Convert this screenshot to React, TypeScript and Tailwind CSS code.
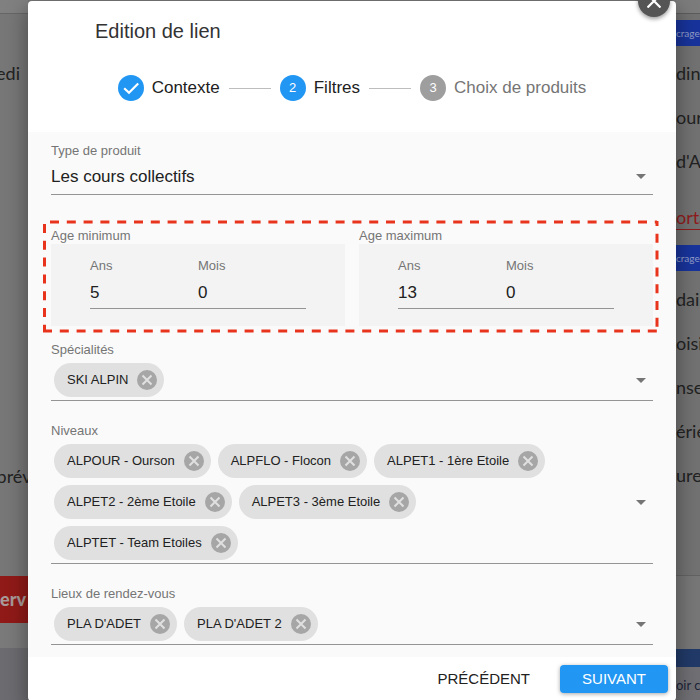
import React from "react";

function CheckIcon() {
  return (
    <svg viewBox="0 0 26 26" className="size-full" fill="none" aria-hidden="true">
      <path d="M6.2 13.2l4.8 4.6L20.2 8.4" stroke="#fff" strokeWidth="2.2" />
    </svg>
  );
}

function ArrowDown() {
  return (
    <svg viewBox="0 0 10 5" className="h-[5px] w-[10px]" aria-hidden="true">
      <path d="M0 0h10L5 5z" fill="#757575" />
    </svg>
  );
}

function StepBadge({ active, children }: { active?: boolean; children: React.ReactNode }) {
  return (
    <span
      className={`flex size-[26px] shrink-0 items-center justify-center rounded-full text-[13px] text-white ${
        active ? "bg-[#2196f3]" : "bg-[#9e9e9e]"
      }`}
    >
      {children}
    </span>
  );
}

function Connector() {
  return <li aria-hidden="true" className="h-px w-[42px] bg-[#bdbdbd]" />;
}

function Stepper() {
  return (
    <ol className="flex items-center justify-center gap-[9px] text-[17px] leading-6 text-[#212121]">
      <li className="flex items-center gap-2">
        <StepBadge active>
          <CheckIcon />
        </StepBadge>
        Contexte
      </li>
      <Connector />
      <li className="flex items-center gap-2" aria-current="step">
        <StepBadge active>2</StepBadge>
        Filtres
      </li>
      <Connector />
      <li className="flex items-center gap-2 text-[#757575]">
        <StepBadge>3</StepBadge>
        Choix de produits
      </li>
    </ol>
  );
}

function Chip({ text }: { text: string }) {
  return (
    <li className="flex h-[34px] items-center gap-[9px] rounded-full bg-[#e0e0e0] pr-[7px] pl-[13px] text-[13px] text-[#212121]">
      {text}
      <button type="button" aria-label={`Retirer ${text}`} className="size-5 rounded-full bg-[#a6a6a6]">
        <svg viewBox="0 0 20 20" className="size-5" fill="none" aria-hidden="true">
          <path d="M5.5 5.5l9 9M14.5 5.5l-9 9" stroke="#e0e0e0" strokeWidth="2" />
        </svg>
      </button>
    </li>
  );
}

function ChipField({ label, chips }: { label: string; chips: string[] }) {
  const id = label.replace(/ /g, "-");
  return (
    <div role="group" aria-labelledby={id}>
      <div id={id} className="text-[13px] leading-4 text-[#757575]">
        {label}
      </div>
      <div className="mt-[5px] flex items-center border-b border-[#949494] pb-[3px] pl-[3px]">
        <ul className="flex flex-1 flex-wrap gap-[7px] pr-16">
          {chips.map((c) => (
            <Chip key={c} text={c} />
          ))}
        </ul>
        <button type="button" aria-label={`Ouvrir ${label}`} className="flex h-6 w-6 items-center justify-center">
          <ArrowDown />
        </button>
      </div>
    </div>
  );
}

function NumberField({ id, label, value }: { id: string; label: string; value: string }) {
  return (
    <div className="min-w-0">
      <label htmlFor={id} className="block text-[13px] leading-4 text-[#757575]">
        {label}
      </label>
      <input
        id={id}
        defaultValue={value}
        inputMode="numeric"
        className="block h-[35px] w-full border-b border-[#949494] bg-transparent pt-[3px] text-[17px] text-[#212121] outline-none"
      />
    </div>
  );
}

function AgeField({ id, label, years, months }: { id: string; label: string; years: string; months: string }) {
  return (
    <fieldset className="min-w-0">
      <legend className="text-[13px] leading-4 text-[#757575]">{label}</legend>
      <div className="grid grid-cols-2 bg-[#f3f3f3] px-[39px] pt-[14px] pb-[17px]">
        <NumberField id={`${id}-ans`} label="Ans" value={years} />
        <NumberField id={`${id}-mois`} label="Mois" value={months} />
      </div>
    </fieldset>
  );
}

function DashedHighlight() {
  return (
    <svg
      className="pointer-events-none absolute -top-2 -left-2 h-[113px] w-[calc(100%+12px)] overflow-visible"
      stroke="#e8341c"
      strokeWidth="3"
      strokeDasharray="9 7.8"
      aria-hidden="true"
    >
      <line x1="7" y1="2" x2="100%" y2="2" />
      <line x1="1.5" y1="4" x2="1.5" y2="112" />
      <line x1="0" y1="111" x2="100%" y2="111" />
      <line x1="100%" y1="1" x2="100%" y2="110" strokeDashoffset="4" />
    </svg>
  );
}

function BackText({ children }: { children: React.ReactNode }) {
  return <p className="h-11 text-[18px] leading-[44px] whitespace-nowrap">{children}</p>;
}

function BackTag() {
  return (
    <div className="h-[26px] bg-[#18349c] text-[10px] leading-[26px] whitespace-nowrap text-[#8f9bc8]">crage</div>
  );
}

function LeftPage() {
  return (
    <aside className="flex w-7 shrink-0 flex-col overflow-hidden bg-[#777] font-['Lato','Open_Sans',sans-serif] text-[#222]">
      <div className="h-[14px] border-b border-[#666] bg-[#808080]" />
      <div className="flex h-[562px] flex-col items-end pt-[37px]">
        <div className="pr-2">
          <BackText>edi</BackText>
        </div>
        <div className="h-[359px]" />
        <div className="self-center">
          <BackText>prév</BackText>
        </div>
      </div>
      <div className="h-[47px] bg-[#901a18] text-[18px] leading-[47px] font-black text-[#a89a98]">erv</div>
      <div className="h-[25px] bg-[#7a7a7a]" />
      <div className="flex-1 bg-[#6c6c70]" />
    </aside>
  );
}

function RightPage() {
  return (
    <aside className="flex w-6 shrink-0 flex-col overflow-hidden bg-[#727272] font-['Lato','Open_Sans',sans-serif] text-[#222]">
      <div className="h-[14px] border-b border-[#5c5c5c] bg-[#7c7c7c]" />
      <div className="h-[6px]" />
      <BackTag />
      <div className="h-[5px]" />
      <BackText>din</BackText>
      <BackText>our</BackText>
      <BackText>d'A</BackText>
      <div className="h-[22px]" />
      <div className="h-[25px] border-b border-[#8f1c1c] text-[18px] leading-6 text-[#8f1c1c]">orta</div>
      <div className="h-[15px]" />
      <BackTag />
      <div className="h-[6px]" />
      <BackText>dail</BackText>
      <BackText>oisi</BackText>
      <BackText>nse</BackText>
      <BackText>érie</BackText>
      <BackText>ure</BackText>
      <div className="h-[79px] border-b border-[#636363]" />
      <div className="h-[73px] bg-[#777]" />
      <div className="h-[18px] bg-[#213a68]" />
      <div className="flex-1 bg-[#707074] pt-[6px] text-[13px] leading-6 whitespace-nowrap text-[#1d2438]">oir c</div>
    </aside>
  );
}

export default function App() {
  return (
    <div className="flex min-h-screen overflow-hidden bg-[#777] font-['Liberation_Sans',Arial,sans-serif]">
      <LeftPage />
      <main className="relative z-10 mt-px flex min-w-0 flex-1 flex-col rounded bg-white shadow-[0_8px_20px_2px_rgba(0,0,0,0.35)]">
        <button
          type="button"
          aria-label="Fermer"
          className="absolute -top-4 right-[6px] flex size-8 items-center justify-center rounded-full bg-[#555] shadow-[0_2px_4px_rgba(0,0,0,0.4)]"
        >
          <svg viewBox="0 0 14 14" className="size-[14px]" fill="none" aria-hidden="true">
            <path d="M0.5 0.5l13 13M13.5 0.5l-13 13" stroke="#fff" strokeWidth="2.2" />
          </svg>
        </button>
        <header className="pt-[14px] pb-[31px]">
          <h1 className="mb-7 pl-[67px] text-[20px] leading-8 text-[#333]">Edition de lien</h1>
          <Stepper />
        </header>
        <form className="flex flex-col gap-[22px] bg-[#fafafa] px-[23px] pt-[11px] pb-3">
          <div>
            <label htmlFor="type" className="block text-[13px] leading-4 text-[#757575]">
              Type de produit
            </label>
            <div className="grid items-center border-b border-[#949494]">
              <select
                id="type"
                className="col-start-1 row-start-1 h-[35px] w-full appearance-none bg-transparent text-[17px] text-[#212121] outline-none"
              >
                <option>Les cours collectifs</option>
              </select>
              <span className="pointer-events-none col-start-1 row-start-1 mr-[7px] justify-self-end">
                <ArrowDown />
              </span>
            </div>
          </div>
          <div className="relative mt-[11px] -mb-[6px] grid grid-cols-2 gap-[14px]">
            <AgeField id="min" label="Age minimum" years="5" months="0" />
            <AgeField id="max" label="Age maximum" years="13" months="0" />
            <DashedHighlight />
          </div>
          <ChipField label="Spécialités" chips={["SKI ALPIN"]} />
          <ChipField
            label="Niveaux"
            chips={[
              "ALPOUR - Ourson",
              "ALPFLO - Flocon",
              "ALPET1 - 1ère Etoile",
              "ALPET2 - 2ème Etoile",
              "ALPET3 - 3ème Etoile",
              "ALPTET - Team Etoiles",
            ]}
          />
          <ChipField label="Lieux de rendez-vous" chips={["PLA D'ADET", "PLA D'ADET 2"]} />
        </form>
        <footer className="flex items-center justify-end gap-5 py-2 pr-2 text-[15px]">
          <button type="button" className="px-[10px] leading-7 text-[#212121]">
            PRÉCÉDENT
          </button>
          <button
            type="button"
            className="w-[108px] rounded bg-[#2196f3] leading-7 text-white shadow-[0_1px_4px_rgba(0,0,0,0.35)]"
          >
            SUIVANT
          </button>
        </footer>
      </main>
      <RightPage />
    </div>
  );
}
